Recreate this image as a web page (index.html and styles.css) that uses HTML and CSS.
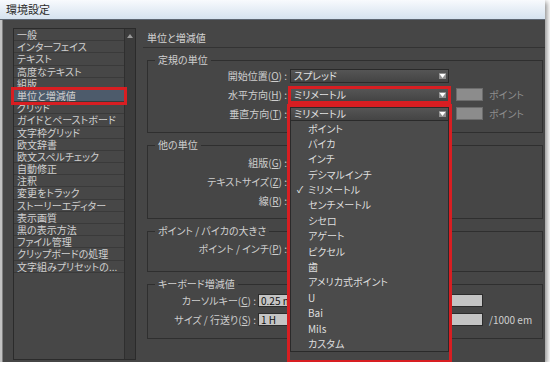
FILE: index.html
```html
<!DOCTYPE html>
<html lang="ja">
<head>
  <meta charset="UTF-8">
  <title>環境設定</title>
  <link rel="stylesheet" href="styles.css">
</head>
<body>
  <div class="window">
    <div class="titlebar">環境設定</div>

    <div class="main">
      <div class="sidebar">
        <ul class="list">
          <li>一般</li>
          <li>インターフェイス</li>
          <li>テキスト</li>
          <li>高度なテキスト</li>
          <li>組版</li>
          <li class="selected">単位と増減値</li>
          <li>グリッド</li>
          <li>ガイドとペーストボード</li>
          <li>文字枠グリッド</li>
          <li>欧文辞書</li>
          <li>欧文スペルチェック</li>
          <li>自動修正</li>
          <li>注釈</li>
          <li>変更をトラック</li>
          <li>ストーリーエディター</li>
          <li>表示画質</li>
          <li>黒の表示方法</li>
          <li>ファイル管理</li>
          <li>クリップボードの処理</li>
          <li>文字組みプリセットの...</li>
        </ul>
        <div class="scrollbar"><span class="scroll-up"></span></div>
      </div>

      <div class="panel">
        <div class="panel-title">単位と増減値</div>

        <fieldset class="group g1">
          <legend>定規の単位</legend>
          <div class="row">
            <label>開始位置(<u>O</u>) :</label>
            <div class="select"><span>スプレッド</span>
              <svg class="arrow" width="7" height="6" viewBox="0 0 7 6"><rect width="7" height="6" fill="#8f8f8f"/><polygon points="0.5,1 6.5,1 3.5,5" fill="#fff"/></svg>
            </div>
          </div>
          <div class="row">
            <label>水平方向(<u>H</u>) :</label>
            <div class="select hl"><span>ミリメートル</span>
              <svg class="arrow" width="7" height="6" viewBox="0 0 7 6"><rect width="7" height="6" fill="#8f8f8f"/><polygon points="0.5,1 6.5,1 3.5,5" fill="#fff"/></svg>
            </div>
            <div class="box"></div>
            <span class="unit">ポイント</span>
          </div>
          <div class="row">
            <label>垂直方向(<u>T</u>) :</label>
            <div class="select open"><span>ミリメートル</span>
              <svg class="arrow" width="7" height="6" viewBox="0 0 7 6"><rect width="7" height="6" fill="#8f8f8f"/><polygon points="0.5,1 6.5,1 3.5,5" fill="#fff"/></svg>
              <ul class="menu">
                <li>ポイント</li>
                <li>パイカ</li>
                <li>インチ</li>
                <li>デシマルインチ</li>
                <li class="checked">ミリメートル</li>
                <li>センチメートル</li>
                <li>シセロ</li>
                <li>アゲート</li>
                <li>ピクセル</li>
                <li>歯</li>
                <li>アメリカ式ポイント</li>
                <li>U</li>
                <li>Bai</li>
                <li>Mils</li>
                <li>カスタム</li>
              </ul>
            </div>
            <div class="box"></div>
            <span class="unit">ポイント</span>
          </div>
        </fieldset>

        <!-- these selects sit under the open menu -->
        <fieldset class="group g2">
          <legend>他の単位</legend>
          <div class="row">
            <label>組版(<u>G</u>) :</label>
            <div class="select"></div>
          </div>
          <div class="row">
            <label>テキストサイズ(<u>Z</u>) :</label>
            <div class="select"></div>
          </div>
          <div class="row">
            <label>線(<u>R</u>) :</label>
            <div class="select"></div>
          </div>
        </fieldset>

        <fieldset class="group g3">
          <legend>ポイント / パイカの大きさ</legend>
          <div class="row">
            <label>ポイント / インチ(<u>P</u>) :</label>
            <div class="select"></div>
          </div>
        </fieldset>

        <fieldset class="group g4">
          <legend>キーボード増減値</legend>
          <div class="row">
            <label>カーソルキー(<u>C</u>) :</label>
            <div class="field">0.25 m</div>
          </div>
          <div class="row">
            <label>サイズ / 行送り(<u>S</u>) :</label>
            <div class="field">1 H</div>
            <span class="unit light">/1000 em</span>
          </div>
        </fieldset>
      </div>
    </div>
  </div>
</body>
</html>
```

FILE: styles.css
```css
* {
  box-sizing: border-box;
}

body {
  margin: 0;
  background-color: #fff;
  font-family: "Noto Sans CJK JP", "Noto Sans", sans-serif;
  font-size: 10px;
  font-feature-settings: "palt";
  color: #d0d0d0;
}

.window {
  width: 545px;
  height: 362px;
  display: flex;
  flex-direction: column;
  background-color: #464646;
  box-shadow: 2px 2px 5px rgba(0, 0, 0, 0.45);
}

.titlebar {
  height: 20px;
  line-height: 19px;
  padding-left: 6px;
  font-size: 11px;
  color: #2a2a2a;
  background: linear-gradient(#f8fafd, #d5e2ef);
  border-bottom: 1px solid #5d6672;
}

.main {
  flex: 1;
  min-height: 0;
  display: flex;
  padding: 8px 0 2px 11px;
  border-left: 2px solid #c3c3c3;
  box-shadow: inset 1px 0 0 #808080;
}

/* left list */
.sidebar {
  width: 123px;
  display: flex;
  border: 1px solid #2b2b2b;
  background-color: #474747;
}

.list {
  flex: 1;
  margin: 0;
  padding: 0;
  list-style: none;
}

.list li {
  height: 12.2px;
  line-height: 11px;
  padding-left: 3px;
  border-bottom: 1px solid #3a3a3a;
  white-space: nowrap;
  color: #d0d0d0;
}

.list li.selected {
  position: relative;
  z-index: 1;
  background-color: #4d5b6b;
  outline: 3px solid #d81e22;
}

.scrollbar {
  width: 11px;
  display: flex;
  justify-content: center;
  padding-top: 5px;
  border-left: 1px solid #2f2f2f;
  background-color: #3c3c3c;
}

.scroll-up {
  width: 0;
  height: 0;
  border-left: 3px solid transparent;
  border-right: 3px solid transparent;
  border-bottom: 4px solid #9a9a9a;
}

/* right panel */
.panel {
  flex: 1;
  min-width: 0;
  margin-left: 7px;
  display: flex;
  flex-direction: column;
}

.panel-title {
  height: 20px;
  line-height: 19px;
  padding-left: 4px;
  border-bottom: 1px solid #333;
  color: #d4d4d4;
}

.group {
  min-width: 0;
  margin: 6px 2px 0 4px;
  padding: 0 0 9px;
  border: 1px solid #2f2f2f;
}

.group legend {
  margin-left: 7px;
  padding: 0 3px;
  line-height: 12px;
  color: #d0d0d0;
}

.g2 {
  padding: 2px 0 8px;
}

.g3 {
  padding: 2px 0 13px;
}

.g4 {
  padding: 1px 0 9px;
}

.row {
  height: 19px;
  display: flex;
  align-items: center;
}

.row label {
  width: 139px;
  flex: none;
  text-align: right;
  white-space: nowrap;
  color: #cecece;
}

.g4 .row label {
  width: 108px;
}

.select {
  position: relative;
  width: 159px;
  height: 14px;
  margin-left: 3px;
  padding: 0 2px 0 3px;
  display: flex;
  align-items: center;
  border: 1px solid #2a2a2a;
  background: linear-gradient(#555, #444);
  color: #e2e2e2;
  white-space: nowrap;
}

.select .arrow {
  margin-left: auto;
}

.select.hl {
  outline: 3px solid #d81e22;
  outline-offset: -1px;
}

.select.open {
  z-index: 5;
}

.select.open::after {
  content: "";
  position: absolute;
  left: -4px;
  right: -4px;
  top: -4px;
  height: 253px;
  border: 3px solid #d81e22;
}

.menu {
  position: absolute;
  top: 100%;
  left: -1px;
  right: -1px;
  height: 232px;
  margin: 0;
  padding: 0;
  list-style: none;
  border: 1px solid #2a2a2a;
  background-color: #4b4b4b;
}

.menu li {
  position: relative;
  height: 15.4px;
  line-height: 15px;
  padding-left: 17px;
  color: #dedede;
}

.menu li.checked::before {
  content: "✓";
  position: absolute;
  left: 6px;
  font-size: 9px;
  color: #f0f0f0;
}

.box {
  width: 27px;
  height: 13px;
  margin-left: 7px;
  border: 1px solid #6c6c6c;
  background-color: #8c8c8c;
}

.unit {
  margin-left: 6px;
  color: #8e8e8e;
  white-space: nowrap;
}

.unit.light {
  color: #cfcfcf;
}

.field {
  width: 225px;
  height: 13px;
  margin-left: 2px;
  padding-left: 2px;
  line-height: 11px;
  border: 1px solid #2c2c2c;
  background-color: #c4c4c4;
  color: #111;
}
```
